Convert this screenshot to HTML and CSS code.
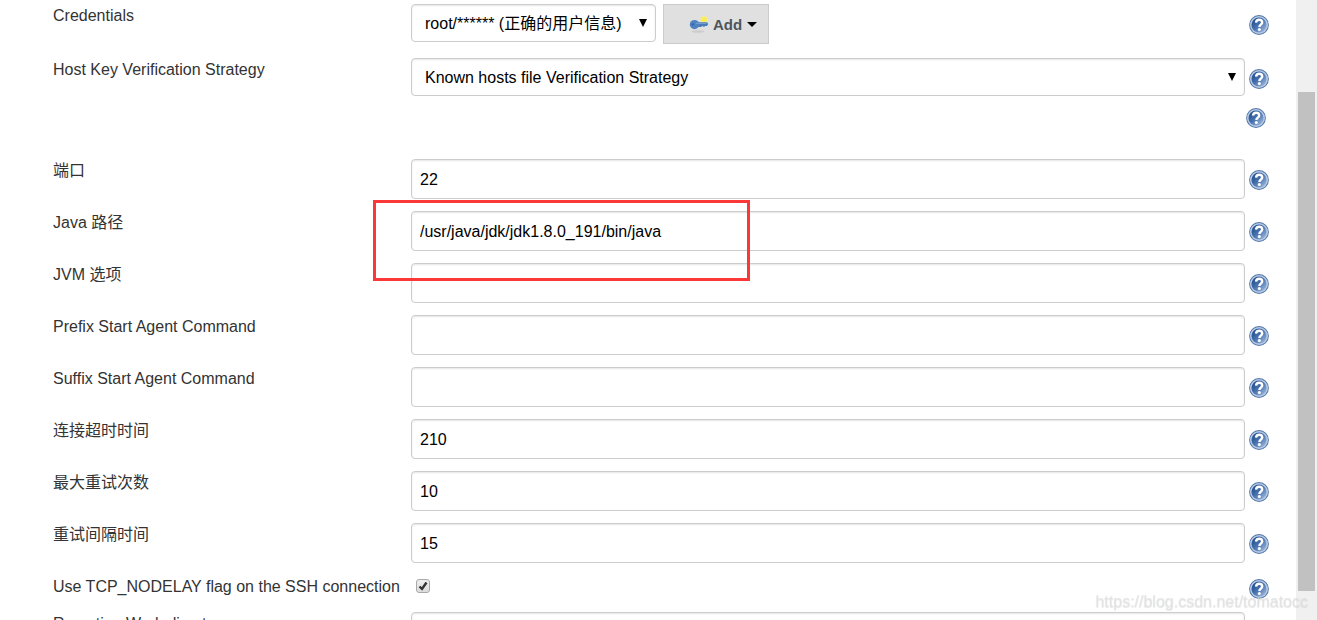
FILE: index.html
```
<!DOCTYPE html>
<html lang="zh-CN">
<head>
<meta charset="UTF-8">
<meta name="viewport" content="width=device-width, initial-scale=1.0">
<title>Node Configuration</title>
<link rel="stylesheet" href="styles.css">
</head>
<body>

<svg class="sprite" aria-hidden="true">
  <defs>
    <linearGradient id="helpFill" x1="0" y1="0" x2="1" y2="1">
      <stop offset="0.1" stop-color="#1f4a8c"/>
      <stop offset="0.5" stop-color="#4a74b0"/>
      <stop offset="0.95" stop-color="#a3bbdd"/>
    </linearGradient>
    <symbol id="help" viewBox="0 0 20 20">
      <circle cx="10" cy="10" r="9.9" fill="#5476a8"/>
      <circle cx="10" cy="10" r="9" fill="#b6cae5"/>
      <circle cx="10" cy="10" r="7.5" fill="url(#helpFill)"/>
      <path d="M7 7.600C7.200 5.600 8.500 4.800 10.100 4.800c1.900 0 3.100 1 3.100 2.600 0 2.200-2.800 2.200-2.800 4.500" fill="none" stroke="#fff" stroke-width="2.400"/>
      <circle cx="10.300" cy="14.600" r="1.500" fill="#fff"/>
    </symbol>
  </defs>
</svg>

<form class="config">
  <div class="row cred-row">
    <label for="credentials">Credentials</label>
    <div class="field">
      <select id="credentials" class="short">
        <option>root/****** (正确的用户信息)</option>
      </select>
      <button type="button" class="add">
        <svg width="20" height="20" viewBox="0 0 20 20" aria-hidden="true">
          <ellipse cx="9" cy="17.500" rx="6.500" ry="1.300" fill="#cdcdcd"/>
          <circle cx="15" cy="5.500" r="4" fill="#f3ec9a" opacity="0.6"/>
          <circle cx="15" cy="5.500" r="2.800" fill="#f9ee4e"/>
          <path d="M8 8.300h10l1.200 1.700-1.200 1.900h-2l-1 1.200-1.500-1.200-1.500 1.200H8z" fill="#4a7cbb"/>
          <ellipse cx="5.500" cy="10.600" rx="4.700" ry="4.600" fill="#4f82c0"/>
          <path d="M7 9.300h10.500" stroke="#7ba4d6" stroke-width="1"/>
          <circle cx="3.800" cy="10.400" r="1.200" fill="#3a68a6"/>
        </svg>
        Add
        <span class="caret"></span>
      </button>
    </div>
    <a class="help" href="#" aria-label="Help"><svg><use href="#help"/></svg></a>
  </div>

  <div class="row">
    <label for="strategy">Host Key Verification Strategy</label>
    <div class="field">
      <select id="strategy">
        <option>Known hosts file Verification Strategy</option>
      </select>
    </div>
    <a class="help" href="#" aria-label="Help"><svg><use href="#help"/></svg></a>
  </div>
  <div class="strategy-help">
    <a class="help" href="#" aria-label="Help"><svg><use href="#help"/></svg></a>
  </div>

  <div class="row">
    <label for="port">端口</label>
    <div class="field"><input type="text" id="port" value="22"></div>
    <a class="help" href="#" aria-label="Help"><svg><use href="#help"/></svg></a>
  </div>
  <div class="row">
    <label for="javaPath">Java 路径</label>
    <div class="field marked"><input type="text" id="javaPath" value="/usr/java/jdk/jdk1.8.0_191/bin/java"></div>
    <a class="help" href="#" aria-label="Help"><svg><use href="#help"/></svg></a>
  </div>
  <div class="row">
    <label for="jvmOptions">JVM 选项</label>
    <div class="field"><input type="text" id="jvmOptions"></div>
    <a class="help" href="#" aria-label="Help"><svg><use href="#help"/></svg></a>
  </div>
  <div class="row">
    <label for="prefixCmd">Prefix Start Agent Command</label>
    <div class="field"><input type="text" id="prefixCmd"></div>
    <a class="help" href="#" aria-label="Help"><svg><use href="#help"/></svg></a>
  </div>
  <div class="row">
    <label for="suffixCmd">Suffix Start Agent Command</label>
    <div class="field"><input type="text" id="suffixCmd"></div>
    <a class="help" href="#" aria-label="Help"><svg><use href="#help"/></svg></a>
  </div>
  <div class="row">
    <label for="timeout">连接超时时间</label>
    <div class="field"><input type="text" id="timeout" value="210"></div>
    <a class="help" href="#" aria-label="Help"><svg><use href="#help"/></svg></a>
  </div>
  <div class="row">
    <label for="retries">最大重试次数</label>
    <div class="field"><input type="text" id="retries" value="10"></div>
    <a class="help" href="#" aria-label="Help"><svg><use href="#help"/></svg></a>
  </div>
  <div class="row">
    <label for="retryWait">重试间隔时间</label>
    <div class="field"><input type="text" id="retryWait" value="15"></div>
    <a class="help" href="#" aria-label="Help"><svg><use href="#help"/></svg></a>
  </div>
  <div class="row check-row">
    <label for="nodelay">Use TCP_NODELAY flag on the SSH connection</label>
    <div class="field"><input type="checkbox" id="nodelay" checked></div>
    <a class="help" href="#" aria-label="Help"><svg><use href="#help"/></svg></a>
  </div>
  <div class="row">
    <label for="workDir">Remoting Work directory</label>
    <div class="field"><input type="text" id="workDir"></div>
    <a class="help" href="#" aria-label="Help"><svg><use href="#help"/></svg></a>
  </div>
</form>

<div class="scrollbar"><div class="thumb"></div></div>
<div class="watermark">https://blog.csdn.net/tomatocc</div>

</body>
</html>
```
FILE: styles.css
```
*, *::after {
  box-sizing: border-box;
}

body {
  display: flex;
  position: relative;
  height: 100vh;
  margin: 0;
  overflow: hidden;
  background-color: #fff;
  color: #333;
  font-family: "Liberation Sans", Arial, "Noto Sans CJK SC", sans-serif;
  font-size: 16px;
}

.sprite {
  position: absolute;
  width: 0;
  height: 0;
}

.config {
  flex: 1;
  padding: 4px 27px 0 53px;
}

.row {
  display: grid;
  grid-template-columns: 358px 1fr 24px;
  align-items: start;
  margin-bottom: 12px;
}

.cred-row {
  margin-bottom: 14px;
}

label {
  line-height: 24px;
  white-space: nowrap;
}

.field {
  display: flex;
  align-items: flex-start;
  gap: 7px;
}

input[type="text"], select {
  width: 100%;
  height: 40px;
  padding: 2px 8px 0;
  border: 1px solid #ccc;
  border-radius: 4px;
  background-color: #fff;
  box-shadow: inset 0 1px 2px rgba(0, 0, 0, 0.1);
  color: #000;
  font-family: inherit;
  font-size: 16px;
}

select {
  appearance: none;
  height: 38px;
  padding: 0 28px 0 13px;
  background-image: url("data:image/svg+xml,%3Csvg xmlns='http://www.w3.org/2000/svg' width='8' height='8'%3E%3Cpath d='M0 0h8L4 8z'/%3E%3C/svg%3E");
  background-repeat: no-repeat;
  background-position: right 8px center;
}

select.short {
  width: 245px;
}

.add {
  display: flex;
  align-items: center;
  width: 106px;
  height: 40px;
  padding: 0 0 0 25px;
  border: 1px solid #ccc;
  background-color: #e0e0e0;
  color: #4d545d;
  font-family: inherit;
  font-size: 15px;
  font-weight: bold;
  cursor: pointer;
}

.add svg {
  margin-right: 4px;
}

.caret {
  margin-left: 5px;
  border: 5px solid transparent;
  border-top-color: #000;
  border-bottom: 0;
}

.help {
  justify-self: end;
  width: 20px;
  height: 20px;
  margin-top: 11px;
}

.help svg {
  display: block;
  width: 20px;
  height: 20px;
}

.strategy-help {
  display: flex;
  justify-content: flex-end;
  margin-bottom: 31px;
  padding-right: 3px;
}

.strategy-help .help {
  margin-top: 0;
}

/* red frame around the java path */
.marked {
  position: relative;
}

.marked::after {
  content: "";
  position: absolute;
  z-index: 1;
  top: -11px;
  left: -38px;
  width: 377px;
  height: 81px;
  border: 3px solid #fb3838;
  pointer-events: none;
}

.check-row {
  min-height: 25px;
}

.check-row .help {
  margin-top: 4px;
}

input[type="checkbox"] {
  appearance: none;
  width: 14px;
  height: 14px;
  margin: 4px 5px;
  border: 1px solid #a9a9a9;
  border-radius: 3px;
  background: url("data:image/svg+xml,%3Csvg xmlns='http://www.w3.org/2000/svg' width='12' height='12'%3E%3Cpath d='M2.500 6.500l2.500 2.500L9.500 2.500' fill='none' stroke='%23333' stroke-width='2.400'/%3E%3C/svg%3E") center no-repeat, linear-gradient(#eee, #dcdcdc);
}

.scrollbar {
  display: flex;
  width: 21px;
  padding: 92px 2px 29px;
  background-color: #f0f0f0;
}

.thumb {
  flex: 1;
  background-color: #c1c1c1;
}

.watermark {
  position: absolute;
  right: 9px;
  bottom: 9px;
  color: rgba(225, 225, 225, 0.8);
  font-size: 16px;
  line-height: 18px;
  text-shadow: 0 1px 1px rgba(0, 0, 0, 0.1);
}
```
